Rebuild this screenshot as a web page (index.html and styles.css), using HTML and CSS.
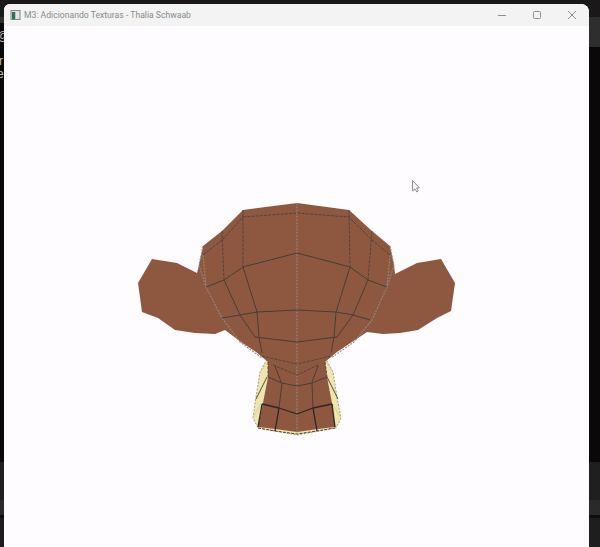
FILE: index.html
```html
<!DOCTYPE html>
<html lang="pt">
<head>
<meta charset="utf-8">
<title>M3: Adicionando Texturas - Thalia Schwaab</title>
<link rel="stylesheet" href="styles.css">
</head>
<body>
<div class="backdrop"><span class="b1">@</span><span class="b2">r</span><span class="b3">e</span></div>
<main class="window">
  <header class="titlebar">
    <svg class="app-icon" viewBox="0 0 10 10" width="11" height="10">
      <rect x="0.5" y="0.5" width="9" height="9" class="ai-frame"/>
      <rect x="1.5" y="2" width="3.5" height="7" class="ai-left"/>
      <rect x="5" y="2" width="3.5" height="7" class="ai-right"/>
    </svg>
    <h1 class="title">M3: Adicionando Texturas - Thalia Schwaab</h1>
    <div class="controls">
      <svg class="ctl" viewBox="0 0 10 10" width="10" height="10"><path d="M1 5.5H9"/></svg>
      <svg class="ctl" viewBox="0 0 10 10" width="10" height="10"><rect x="1.5" y="1.5" width="7" height="7" rx="1"/></svg>
      <svg class="ctl" viewBox="0 0 10 10" width="10" height="10"><path d="M1 1L9 9M9 1L1 9"/></svg>
    </div>
  </header>
  <svg class="scene" viewBox="4 26 585 521" width="585" height="521">
    <polygon class="cream" points="267,359 260,372 256,397 253,418 258,428 297,435 336,428 341,418 337,397 333,372 326,359"/>
    <path class="cream-line" d="M260,372L268,362M253,418L261,403M333,372L326,362M341,418L332,403"/>
    <polygon class="skin" points="297,203 349,210 372,231 390,246 394,265 395,274 417,263 441,259 455,283 451,311 437,318 418,330 400,333 383,334 367,332 352,342 337,352 325,362 327,377 332,403 335,427 318,429 297,432 275,429 258,427 263,403 268,377 268,362 256,352 241,342 225,330 215,334 195,333 175,330 158,318 142,312 138,283 152,259 177,263 197,273 199,265 203,246 222,231 243,210"/>

    <g class="dash-gray">
      <path d="M297,203V433"/>
      <path d="M203,255L206,287L222,318L240,342L262,358"/>
      <path d="M390,255L387,287L372,320L354,342L331,358"/>
      <path d="M203,246L199,265L206,287"/>
      <path d="M390,246L394,265L387,287"/>
    </g>
    <g class="dash-dark">
      <path d="M243,217L297,213L349,217"/>
      <path d="M203,255L222,240L243,217"/>
      <path d="M390,255L372,240L349,217"/>
      <path d="M243,210V267M349,210L350,267M222,231L224,280M372,231L368,280"/>
      <path d="M273,365L297,375L318,365"/>
      <path d="M262,356L297,364L331,356"/>
      <path d="M258,428L275,431L297,434L317,431L335,428"/>
      <path d="M268,362L268,377M325,362L327,377"/>
    </g>
    <g class="line">
      <path d="M206,287L224,280L243,267L297,253L350,267L368,280L387,287"/>
      <path d="M224,280L240,315M243,267L257,312M350,267L336,312M368,280L353,315"/>
      <path d="M222,318L240,315L257,312L297,310L336,312L353,315L370,320"/>
      <path d="M240,315L255,337M353,315L337,337M257,312L259,337M336,312L334,337"/>
      <path d="M255,337L297,342L337,337"/>
      <path d="M259,337L262,353M334,337L331,353"/>
      <path d="M275,366L281,382M318,366L312,382"/>
      <path d="M268,377L282,383L297,386L312,383L327,377"/>
      <path d="M282,383L279,408M312,383L313,408"/>
      <path d="M267,377L256,399M327,377L338,399"/>
    </g>
    <g class="line-strong">
      <path d="M262,404L279,408L297,414L313,408L332,404"/>
      <path d="M279,408L275,431M313,408L317,431M262,404L258,427M332,404L335,427"/>
    </g>
    <path class="cursor" d="M412.5,180.5V191L415,189L416.8,192L418.3,191L416.6,188H419.5Z"/>
  </svg>
</main>
</body>
</html>
```
FILE: styles.css
```css
html, body {
  margin: 0;
  padding: 0;
  width: 600px;
  height: 547px;
  overflow: hidden;
}

body {
  position: relative;
  background:
    linear-gradient(#2e2e2e, #2e2e2e) right 17px / 11px 30px no-repeat,
    linear-gradient(to bottom,
      #1a1819 0, #1a1819 17px,
      #2e2e2e 17px, #2e2e2e 23px,
      #0a0809 23px, #0a0809 462px,
      #1f1f1f 462px, #1f1f1f 500px,
      #2a2a2a 500px, #2a2a2a 515px,
      #0e0e0e 515px, #0e0e0e 518px,
      #1e1e1e 518px);
}

.backdrop {
  position: absolute;
  left: -3px;
  top: 0;
  width: 8px;
  height: 100px;
  color: #bcbcbc;
  font: 12px "Liberation Sans", sans-serif;
}

.backdrop span {
  position: absolute;
  left: 0;
}

.b1 { top: 29px; }
.b2 { top: 54px; left: 2px !important; }
.b3 { top: 67px; }

.window {
  position: relative;
  margin: 4px 11px 0 4px;
  width: 585px;
  height: 543px;
  display: flex;
  flex-direction: column;
  background: #fefcfe;
  border-radius: 6px 8px 0 0;
  overflow: hidden;
}

.titlebar {
  flex: 0 0 22px;
  display: flex;
  align-items: center;
  background: #f3f3f4;
  padding-left: 6px;
}

.app-icon {
  flex: none;
  margin-right: 3px;
}

.ai-frame { fill: #e4e8e4; stroke: #7d8783; stroke-width: 1; }
.ai-left { fill: #2f6f58; }
.ai-right { fill: #dfe6e6; }

.title {
  margin: 0;
  flex: 1;
  font: 400 8.65px "Roboto", sans-serif;
  color: #8a8a8a;
  white-space: nowrap;
}

.controls {
  display: flex;
  align-items: center;
  gap: 25px;
  padding-right: 12px;
}

.ctl {
  fill: none;
  stroke: #8e8e8e;
  stroke-width: 1;
}

.scene {
  display: block;
  flex: none;
}

.cream { fill: #efe5ad; stroke: #8c8a78; stroke-width: 0.8; stroke-dasharray: 2 1.5; }
.cream-line { fill: none; stroke: #d5cb97; stroke-width: 0.8; }
.skin { fill: #8e5840; }

.scene g { fill: none; stroke-linejoin: round; }
.dash-gray { stroke: #8f8a84; stroke-width: 1.1; stroke-dasharray: 2 1.2; }
.dash-dark { stroke: #4f4540; stroke-width: 1; stroke-dasharray: 3 1.2; }
.line { stroke: #3f3a37; stroke-width: 0.9; }
.line-strong { stroke: #2a2624; stroke-width: 1.3; }

.cursor { fill: #f6f6f6; stroke: #77777b; stroke-width: 0.8; }
```
